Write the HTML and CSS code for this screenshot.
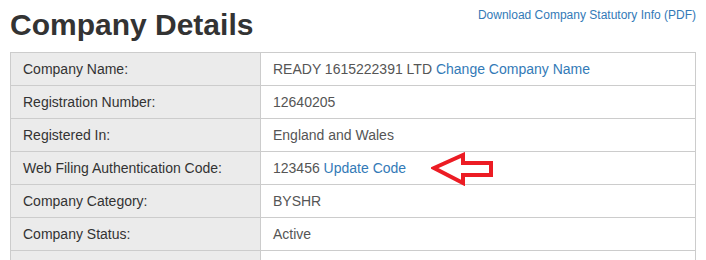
FILE: index.html
```html
<!DOCTYPE html>
<html lang="en">
<head>
    <meta charset="UTF-8">
    <meta name="viewport" content="width=device-width, initial-scale=1.0">
    <title>Company Details</title>
    <link rel="stylesheet" href="styles.css">
</head>
<body>
    <div class="page">
        <div class="header">
            <h1>Company Details</h1>
            <a href="#" class="download">Download Company Statutory Info (PDF)</a>
        </div>
        <table class="details">
            <tr>
                <th>Company Name:</th>
                <td>READY 1615222391 LTD <a href="#">Change Company Name</a></td>
            </tr>
            <tr>
                <th>Registration Number:</th>
                <td>12640205</td>
            </tr>
            <tr>
                <th>Registered In:</th>
                <td>England and Wales</td>
            </tr>
            <tr>
                <th>Web Filing Authentication Code:</th>
                <td>
                    <span class="marked">123456 <a href="#">Update Code</a>
                        <svg class="arrow" width="64" height="34" viewBox="0 0 64 34">
                            <polygon points="3,16 32,3 32,11 60,11 60,23 32,23 32,31" fill="#fff" stroke="#ec1c24" stroke-width="4" stroke-linejoin="miter"/>
                        </svg>
                    </span>
                </td>
            </tr>
            <tr>
                <th>Company Category:</th>
                <td>BYSHR</td>
            </tr>
            <tr>
                <th>Company Status:</th>
                <td>Active</td>
            </tr>
            <tr class="next">
                <th></th>
                <td></td>
            </tr>
        </table>
    </div>
</body>
</html>
```

FILE: styles.css
```css
body {
    margin: 0;
    font-family: "Liberation Sans", Arial, sans-serif;
    font-size: 14px;
    color: #333;
    background-color: #fff;
}
.page {
    padding: 0 10px;
}
.header {
    display: flex;
    justify-content: space-between;
    align-items: flex-start;
}
h1 {
    margin: 8px 0 11px 0;
    font-size: 30px;
    line-height: 33px;
    font-weight: bold;
    color: #333;
}
a {
    color: #337ab7;
    text-decoration: none;
}
.download {
    margin-top: 7px;
    font-size: 12px;
    line-height: 17px;
}
.details {
    width: 100%;
    border-collapse: collapse;
}
.details th,
.details td {
    border: 1px solid #ccc;
    padding: 6px 12px;
    line-height: 20px;
    text-align: left;
    font-weight: normal;
}
.details th {
    width: 225px;
    background-color: #ebebeb;
    color: #333;
}
.details td {
    color: #555;
}
.details .next th,
.details .next td {
    height: 20px;
}
.marked {
    position: relative;
}
.arrow {
    position: absolute;
    left: calc(100% + 25px);
    top: -8px;
}
```
